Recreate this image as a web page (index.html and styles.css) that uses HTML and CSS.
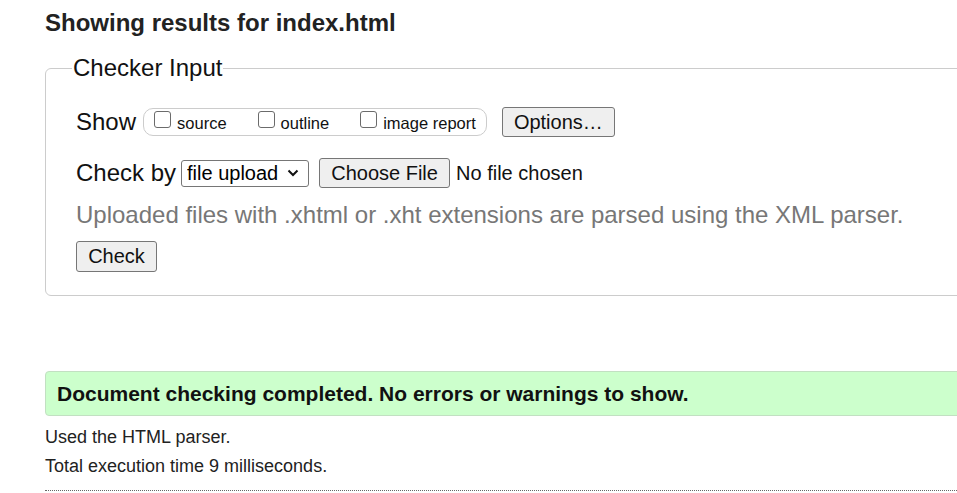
FILE: index.html
```html
<!DOCTYPE html>
<html lang="en">
<head>
<meta charset="utf-8">
<title>Showing results for index.html - Nu Html Checker</title>
<link rel="stylesheet" href="styles.css">
</head>
<body>
<div class="page">
  <h2 class="title">Showing results for index.html</h2>
  <form class="checker">
    <fieldset class="input-set">
      <legend class="legend">Checker Input</legend>
      <div class="row show-row">
        <span class="row-label">Show</span>
        <span class="opts">
          <label class="opt"><input type="checkbox" class="cb"><span>source</span></label>
          <label class="opt"><input type="checkbox" class="cb"><span>outline</span></label>
          <label class="opt"><input type="checkbox" class="cb"><span>image report</span></label>
        </span>
        <button type="button" class="btn btn-options">Options…</button>
      </div>
      <div class="row by-row">
        <span class="row-label">Check by</span>
        <select class="sel"><option>file upload</option></select>
        <button type="button" class="btn btn-file">Choose File</button>
        <span class="nofile">No file chosen</span>
      </div>
      <p class="hint">Uploaded files with .xhtml or .xht extensions are parsed using the XML parser.</p>
      <div class="row submit-row">
        <button type="button" class="btn btn-check">Check</button>
      </div>
    </fieldset>
  </form>
  <div class="success">Document checking completed. No errors or warnings to show.</div>
  <p class="meta">Used the HTML parser.</p>
  <p class="meta">Total execution time 9 milliseconds.</p>
  <hr class="sep">
</div>
</body>
</html>
```
FILE: styles.css
```css
html, body {
  margin: 0;
  padding: 0;
  overflow: hidden;
  background: #fff;
}
body {
  font-family: "Liberation Sans", Arial, sans-serif;
  color: #000;
  width: 957px;
  height: 493px;
}
.page {
  padding-left: 45px;
  width: 1100px;
}
.title {
  margin: 0;
  padding-top: 9px;
  font-size: 24px;
  line-height: 28px;
  font-weight: bold;
  color: #222;
}
.checker {
  margin: 0;
  padding-top: 17px;
}
.input-set {
  margin: 0;
  border: 1px solid #ccc;
  border-radius: 6px;
  padding: 0 0 23px 30px;
  min-width: 0;
}
.legend {
  font-size: 24px;
  line-height: 28px;
  padding: 0 1px;
  margin-left: -4px;
  color: #111;
}
.row {
  display: flex;
  align-items: center;
}
.row-label {
  font-size: 24px;
  color: #111;
}
.show-row {
  margin-top: 25px;
  height: 30px;
}
.opts {
  display: inline-flex;
  align-items: center;
  margin-left: 7px;
  height: 26px;
  padding: 0 10px 0 10px;
  border: 1px solid #ccc;
  border-radius: 10px;
}
.opt {
  display: inline-flex;
  align-items: flex-end;
  font-size: 16.5px;
  line-height: 19px;
  color: #111;
  margin-right: 31px;
}
.opt:last-child {
  margin-right: 0;
}
.cb {
  appearance: none;
  -webkit-appearance: none;
  box-sizing: border-box;
  width: 17px;
  height: 17px;
  margin: 0 6px 5px 0;
  border: 1px solid #6b6b6b;
  border-radius: 3px;
  background: #fff;
}
.btn {
  font-family: "Liberation Sans", Arial, sans-serif;
  font-size: 20px;
  background: #efefef;
  border: 1px solid #767676;
  border-radius: 3px;
  color: #111;
  padding: 0;
  height: 30px;
}
.btn-options {
  margin-left: 15px;
  width: 113px;
}
.by-row {
  margin-top: 21px;
  height: 30px;
}
.sel {
  appearance: none;
  -webkit-appearance: none;
  font-family: "Liberation Sans", Arial, sans-serif;
  font-size: 20px;
  height: 27px;
  width: 128px;
  margin-left: 5px;
  padding: 0 0 0 5px;
  border: 1px solid #767676;
  border-radius: 3px;
  background: #fff url("data:image/svg+xml,%3Csvg xmlns='http://www.w3.org/2000/svg' width='12' height='8' viewBox='0 0 12 8'%3E%3Cpath d='M1.5 1.5 L6 6 L10.5 1.5' fill='none' stroke='%23111' stroke-width='2'/%3E%3C/svg%3E") no-repeat right 9px center;
  color: #000;
}
.btn-file {
  margin-left: 10px;
  width: 131px;
}
.nofile {
  font-size: 20px;
  margin-left: 6px;
  color: #111;
}
.hint {
  margin: 13px 0 0;
  font-size: 24px;
  line-height: 28px;
  color: #777;
}
.submit-row {
  margin-top: 12px;
}
.btn-check {
  width: 81px;
  height: 31px;
}
.success {
  margin-top: 75px;
  height: 45px;
  box-sizing: border-box;
  background: #ccffcc;
  border: 1px solid #c2e0c2;
  border-radius: 4px;
  padding-left: 11px;
  font-weight: bold;
  font-size: 21px;
  line-height: 43px;
  color: #111;
}
.meta {
  margin: 11px 0 0;
  font-size: 18px;
  line-height: 20px;
  color: #222;
}
.meta + .meta {
  margin-top: 9px;
}
.sep {
  margin: 14px 0 0;
  border: 0;
  border-top: 1px dotted #666;
  height: 0;
}
```
